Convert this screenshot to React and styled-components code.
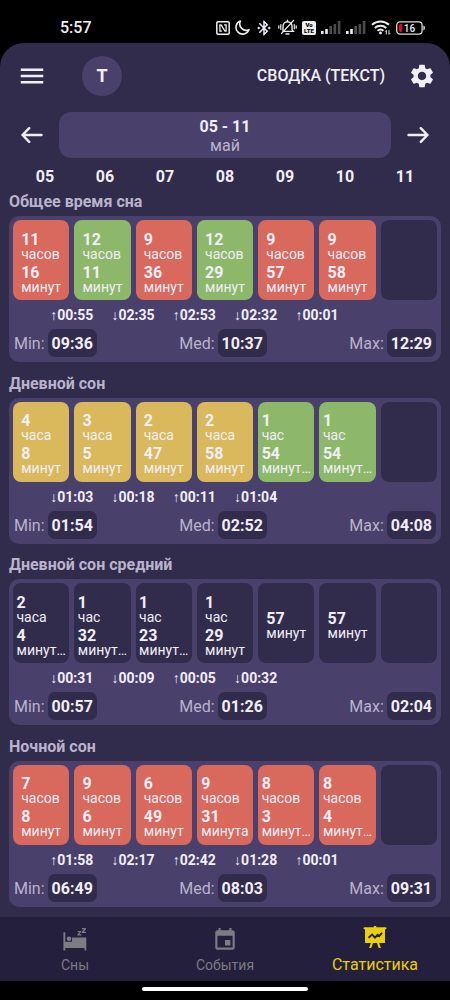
import React from "react";
import styled, { createGlobalStyle } from "styled-components";
import { MdMenu, MdSettings, MdEvent, MdBluetoothConnected } from "react-icons/md";

const COLORS = {
  page: "#312c4b",
  panel: "#49406b",
  nav: "#231f3d",
  red: "#d9685d",
  green: "#8db869",
  yellow: "#d9b95c",
  dark: "#312c4b",
  text: "#f1eef8",
  muted: "#b9b4cb",
  active: "#e9cf0c",
  inactive: "#7d7b83",
};

const days = ["05", "06", "07", "08", "09", "10", "11"];

const sections = [
  {
    title: "Общее время сна",
    cells: [
      { color: "red", parts: [["11", "часов"], ["16", "минут"]] },
      { color: "green", parts: [["12", "часов"], ["11", "минут"]] },
      { color: "red", parts: [["9", "часов"], ["36", "минут"]] },
      { color: "green", parts: [["12", "часов"], ["29", "минут"]] },
      { color: "red", parts: [["9", "часов"], ["57", "минут"]] },
      { color: "red", parts: [["9", "часов"], ["58", "минут"]] },
      { color: "dark", parts: [] },
    ],
    diffs: ["↑00:55", "↓02:35", "↑02:53", "↓02:32", "↑00:01", ""],
    stats: { Min: "09:36", Med: "10:37", Max: "12:29" },
  },
  {
    title: "Дневной сон",
    cells: [
      { color: "yellow", parts: [["4", "часа"], ["8", "минут"]] },
      { color: "yellow", parts: [["3", "часа"], ["5", "минут"]] },
      { color: "yellow", parts: [["2", "часа"], ["47", "минут"]] },
      { color: "yellow", parts: [["2", "часа"], ["58", "минут"]] },
      { color: "green", parts: [["1", "час"], ["54", "минут…"]] },
      { color: "green", parts: [["1", "час"], ["54", "минут…"]] },
      { color: "dark", parts: [] },
    ],
    diffs: ["↓01:03", "↓00:18", "↑00:11", "↓01:04", "", ""],
    stats: { Min: "01:54", Med: "02:52", Max: "04:08" },
  },
  {
    title: "Дневной сон средний",
    cells: [
      { color: "dark", parts: [["2", "часа"], ["4", "минут…"]] },
      { color: "dark", parts: [["1", "час"], ["32", "минут…"]] },
      { color: "dark", parts: [["1", "час"], ["23", "минут…"]] },
      { color: "dark", parts: [["1", "час"], ["29", "минут"]] },
      { color: "dark", parts: [["57", "минут"]] },
      { color: "dark", parts: [["57", "минут"]] },
      { color: "dark", parts: [] },
    ],
    diffs: ["↓00:31", "↓00:09", "↑00:05", "↓00:32", "", ""],
    stats: { Min: "00:57", Med: "01:26", Max: "02:04" },
  },
  {
    title: "Ночной сон",
    cells: [
      { color: "red", parts: [["7", "часов"], ["8", "минут"]] },
      { color: "red", parts: [["9", "часов"], ["6", "минут"]] },
      { color: "red", parts: [["6", "часов"], ["49", "минут"]] },
      { color: "red", parts: [["9", "часов"], ["31", "минута"]] },
      { color: "red", parts: [["8", "часов"], ["3", "минут…"]] },
      { color: "red", parts: [["8", "часов"], ["4", "минут…"]] },
      { color: "dark", parts: [] },
    ],
    diffs: ["↑01:58", "↓02:17", "↑02:42", "↓01:28", "↑00:01", ""],
    stats: { Min: "06:49", Med: "08:03", Max: "09:31" },
  },
];

const NfcIcon = () => (
  <svg width="14" height="14" viewBox="0 0 14 14" fill="none" stroke="#eee" strokeWidth="1.5">
    <rect x="0.8" y="0.8" width="12.4" height="12.4" rx="1.2" />
    <path d="M6 10.2H3.9V3.8h1.2L8.9 10.2h1.2V3.8H8" strokeWidth="1.3" />
  </svg>
);

const MoonIcon = () => (
  <svg width="15" height="15" viewBox="0 0 15 15" fill="none" stroke="#eee" strokeWidth="1.6" strokeLinejoin="round">
    <path d="M5.4 1.1A6.7 6.7 0 1 0 14 9.6 6.4 6.4 0 0 1 5.4 1.1z" />
  </svg>
);

const BellOffIcon = () => (
  <svg width="19" height="17" viewBox="0 0 19 17" fill="none" stroke="#eee" strokeWidth="1.4" strokeLinecap="round">
    <path d="M5 12.2V7.2a4.5 4.5 0 0 1 9 0v3.4l1.4 1.8H6.6" />
    <path d="M9.5 1.2v1.4M8 15h3M15.6 1.4 3.6 14.4" />
    <path d="M2.8 5.6v4.8M.8 6.8v2.4M16.3 5.6v4M18.2 6.8v2.4" strokeWidth="1.2" />
  </svg>
);

const SignalIcon = () => (
  <svg width="20" height="13" viewBox="0 0 20 13">
    {[3, 5, 8, 10, 13].map((h, i) => (
      <rect key={h} x={i * 4.2} y={13 - h} width="2.6" height={h} fill={i < 2 ? "#eee" : "#4c4c4c"} />
    ))}
  </svg>
);

const WifiIcon = () => (
  <svg width="20" height="15" viewBox="0 0 20 15" fill="none" stroke="#eee" strokeWidth="2">
    <path d="M1 4.8a12.4 12.4 0 0 1 17 0M3.8 7.9a8.4 8.4 0 0 1 11.4 0M6.5 10.8a4.6 4.6 0 0 1 6 0" />
    <circle cx="9.5" cy="13" r="1.4" fill="#eee" stroke="none" />
    <path d="M15.3 14.5v-4M14.2 11.6l1.1-1.2M18 10.3v4M19.1 13.2 18 14.4" strokeWidth="1" />
  </svg>
);

const BatteryIcon = () => (
  <svg width="30" height="14" viewBox="0 0 30 14">
    <rect x="0.7" y="0.9" width="25.4" height="12.2" rx="3.4" fill="none" stroke="#ddd" strokeWidth="1.3" />
    <path d="M3 4.4Q3 3 4.4 3H6v8H4.4Q3 11 3 9.6z" fill="#e3071a" />
    <path d="M27.4 4.6q1.6.4 1.6 2.4t-1.6 2.4z" fill="#ddd" />
    <text x="13.5" y="10.8" fontSize="10" fontWeight="500" fill="#eee" textAnchor="middle">
      16
    </text>
  </svg>
);

const ArrowIcon = ({ right }) => (
  <svg width="22" height="18" viewBox="0 0 22 18" fill="none" stroke={COLORS.text} strokeWidth="2.4" strokeLinecap="round" strokeLinejoin="round">
    {right ? <path d="M1.5 9h19M13.8 2.2 20.5 9l-6.7 6.8" /> : <path d="M20.5 9h-19M8.2 2.2 1.5 9l6.7 6.8" />}
  </svg>
);

const SleepIcon = () => (
  <svg width="24" height="26" viewBox="0 1 24 26" fill="currentColor">
    <path d="M.4 6.3h1.9v9.4H9v-4.2h14.3v13h-1.8V22H2.3v2.5H.4z" />
    <circle cx="6" cy="12.8" r="2.3" />
    <path d="M14.6 4.9h3.6v1.2l-2 2.2h2.1v1.2h-3.8V8.3l2-2.2h-1.9zM18.9 1.9h4v1.3l-2.3 2.6H23v1.3h-4.2V5.8l2.3-2.6h-2.2z" />
  </svg>
);

const StatsIcon = () => (
  <svg width="24" height="30" viewBox="0 -1 24 30">
    <path
      d="M10.8 1.2V0h2.4v1.2h9.3q1 0 1 1t-1 1H22V17h-5.9l1.8 4.9h-2.2L13.9 17h-3.8l-1.8 4.9H6.1L7.9 17H2V3.2h-.5q-1 0-1-1t1-1z"
      fill="currentColor"
    />
    <path d="m5.5 11.8 3.6-3.2 2.9 3 2.6-2.7 1.5 1.2L19 6.8" fill="none" stroke={COLORS.nav} strokeWidth="1.9" />
  </svg>
);

const tabs = [
  { label: "Сны", icon: <SleepIcon /> },
  { label: "События", icon: <MdEvent size={26} /> },
  { label: "Статистика", icon: <StatsIcon />, active: true },
];

const Section = ({ section }) => (
  <SectionBlock>
    <SectionTitle>{section.title}</SectionTitle>
    <Card>
      <Cells>
        {section.cells.map((cell, i) => (
          <Cell key={i} $color={COLORS[cell.color]}>
            <div>
              {cell.parts.map(([value, unit], j) => (
                <Duration key={j}>
                  <Value>{value}</Value>
                  <Unit>{unit}</Unit>
                </Duration>
              ))}
            </div>
          </Cell>
        ))}
      </Cells>
      <Diffs>
        {section.diffs.map((diff, i) => (
          <Diff key={i}>{diff}</Diff>
        ))}
      </Diffs>
      <Stats>
        {Object.entries(section.stats).map(([name, value]) => (
          <Stat key={name}>
            <span>{name}:</span>
            <StatValue>{value}</StatValue>
          </Stat>
        ))}
      </Stats>
    </Card>
  </SectionBlock>
);

const App = () => (
  <Screen>
    <GlobalStyle />
    <StatusBar>
      <Clock>5:57</Clock>
      <StatusIcons>
        <NfcIcon />
        <MoonIcon />
        <MdBluetoothConnected size={18} />
        <BellOffIcon />
        <VolteBadge>
          <span>Vo</span>
          <span>LTE</span>
        </VolteBadge>
        <SignalIcon />
        <SignalIcon />
        <WifiIcon />
        <BatteryIcon />
      </StatusIcons>
    </StatusBar>
    <Main>
      <Header>
        <IconButton aria-label="Меню">
          <MdMenu size={30} />
        </IconButton>
        <Avatar>T</Avatar>
        <PageTitle>СВОДКА (ТЕКСТ)</PageTitle>
        <IconButton aria-label="Настройки">
          <MdSettings size={28} />
        </IconButton>
      </Header>
      <Period>
        <IconButton aria-label="Назад">
          <ArrowIcon />
        </IconButton>
        <PeriodButton>
          <PeriodRange>05 - 11</PeriodRange>
          <PeriodMonth>май</PeriodMonth>
        </PeriodButton>
        <IconButton aria-label="Вперёд">
          <ArrowIcon right />
        </IconButton>
      </Period>
      <Days>
        {days.map((day) => (
          <span key={day}>{day}</span>
        ))}
      </Days>
      <SectionList>
        {sections.map((section) => (
          <Section key={section.title} section={section} />
        ))}
      </SectionList>
    </Main>
    <TabBar>
      {tabs.map((tab) => (
        <Tab key={tab.label} $active={tab.active}>
          <TabIcon>{tab.icon}</TabIcon>
          {tab.label}
        </Tab>
      ))}
    </TabBar>
    <GestureArea>
      <GestureBar />
    </GestureArea>
  </Screen>
);

const GlobalStyle = createGlobalStyle`
  * {
    box-sizing: border-box;
  }
  body {
    margin: 0;
    background: #000;
    font-family: Roboto, "Noto Sans", sans-serif;
  }
  button {
    border: none;
    padding: 0;
    background: none;
    font-family: inherit;
    color: inherit;
    cursor: pointer;
  }
  svg {
    display: block;
    flex-shrink: 0;
  }
`;

const Screen = styled.div`
  display: flex;
  flex-direction: column;
  min-height: 100vh;
  color: ${COLORS.text};
`;

const StatusBar = styled.div`
  display: flex;
  align-items: center;
  justify-content: space-between;
  height: 43px;
  padding: 12px 24px 0 60px;
`;

const Clock = styled.div`
  font-size: 16px;
  font-weight: 500;
`;

const StatusIcons = styled.div`
  display: flex;
  align-items: center;
  gap: 5px;
`;

const VolteBadge = styled.span`
  display: flex;
  flex-direction: column;
  justify-content: center;
  width: 14px;
  height: 14px;
  border-radius: 2px;
  background: #eee;
  color: #000;
  font-size: 6px;
  font-weight: 900;
  line-height: 6px;
  text-align: center;
`;

const Main = styled.main`
  flex: 1;
  display: flex;
  flex-direction: column;
  padding-bottom: 10px;
  background: ${COLORS.page};
  border-radius: 24px 24px 0 0;
`;

const Header = styled.header`
  display: flex;
  align-items: center;
  height: 65px;
  padding: 0 8px 0 12px;
`;

const IconButton = styled.button`
  display: flex;
  align-items: center;
  justify-content: center;
  width: 40px;
  height: 40px;
`;

const Avatar = styled.div`
  display: flex;
  align-items: center;
  justify-content: center;
  width: 40px;
  height: 40px;
  margin-left: 30px;
  border-radius: 50%;
  background: ${COLORS.panel};
  font-size: 18px;
  font-weight: 700;
`;

const PageTitle = styled.h1`
  flex: 1;
  margin: 0 17px 0 0;
  font-size: 16px;
  font-weight: 500;
  text-align: right;
`;

const Period = styled.div`
  display: flex;
  align-items: center;
  gap: 7px;
  padding: 4px 12px 0;
`;

const PeriodButton = styled.button`
  flex: 1;
  display: flex;
  flex-direction: column;
  align-items: center;
  justify-content: center;
  height: 46px;
  padding-top: 3px;
  border-radius: 12px;
  background: ${COLORS.panel};
`;

const PeriodRange = styled.span`
  font-size: 16px;
  font-weight: 700;
  line-height: 18px;
`;

const PeriodMonth = styled.span`
  font-size: 16px;
  line-height: 20px;
  color: ${COLORS.muted};
`;

const Days = styled.div`
  display: grid;
  grid-template-columns: repeat(7, 1fr);
  padding: 9px 15px 4px;
  font-size: 16px;
  font-weight: 700;
  line-height: 20px;
  text-align: center;
`;

const SectionList = styled.div`
  flex: 1;
  display: flex;
  flex-direction: column;
  justify-content: space-between;
  gap: 8px;
  padding: 0 9px;
`;

const SectionBlock = styled.section`
  display: flex;
  flex-direction: column;
  gap: 3px;
`;

const SectionTitle = styled.h2`
  margin: 0;
  font-size: 16px;
  font-weight: 700;
  line-height: 22px;
  color: ${COLORS.muted};
`;

const Card = styled.div`
  padding: 4px 4px 5px;
  border-radius: 10px;
  background: ${COLORS.panel};
`;

const Cells = styled.div`
  display: grid;
  grid-template-columns: repeat(7, minmax(0, 1fr));
  gap: 5px;
`;

const Cell = styled.div`
  display: flex;
  align-items: center;
  justify-content: center;
  height: 80px;
  padding: 3px 3px 0;
  border-radius: 8px;
  background: ${(props) => props.$color};
`;

const Duration = styled.div`
  padding-top: 5px;
`;

const Value = styled.div`
  font-size: 16px;
  font-weight: 700;
  line-height: 12px;
`;

const Unit = styled.div`
  font-size: 14px;
  line-height: 16px;
  white-space: nowrap;
`;

const Diffs = styled.div`
  display: grid;
  grid-template-columns: repeat(6, 1fr);
  padding: 2px 28px 0;
  font-size: 14px;
  font-weight: 700;
  line-height: 27px;
  text-align: center;
`;

const Diff = styled.span`
  min-height: 27px;
`;

const Stats = styled.div`
  display: flex;
  justify-content: space-between;
  padding: 0 1px;
`;

const Stat = styled.div`
  display: flex;
  align-items: baseline;
  gap: 3px;
  font-size: 16px;
  color: ${COLORS.muted};
`;

const StatValue = styled.span`
  padding: 2px 4px 0;
  border-radius: 7px;
  background: ${COLORS.dark};
  color: ${COLORS.text};
  font-weight: 700;
  line-height: 26px;
`;

const TabBar = styled.nav`
  display: grid;
  grid-template-columns: repeat(3, 1fr);
  height: 64px;
  background: ${COLORS.nav};
`;

const Tab = styled.button`
  display: flex;
  flex-direction: column;
  align-items: center;
  padding-top: 8px;
  font-size: ${(props) => (props.$active ? "16px" : "14px")};
  line-height: 20px;
  color: ${(props) => (props.$active ? COLORS.active : COLORS.inactive)};
`;

const TabIcon = styled.span`
  display: flex;
  align-items: center;
  height: 30px;
`;

const GestureArea = styled.div`
  display: flex;
  justify-content: center;
  height: 19px;
  padding-top: 6px;
`;

const GestureBar = styled.div`
  width: 37%;
  height: 4px;
  border-radius: 2px;
  background: #fff;
`;

export default App;
